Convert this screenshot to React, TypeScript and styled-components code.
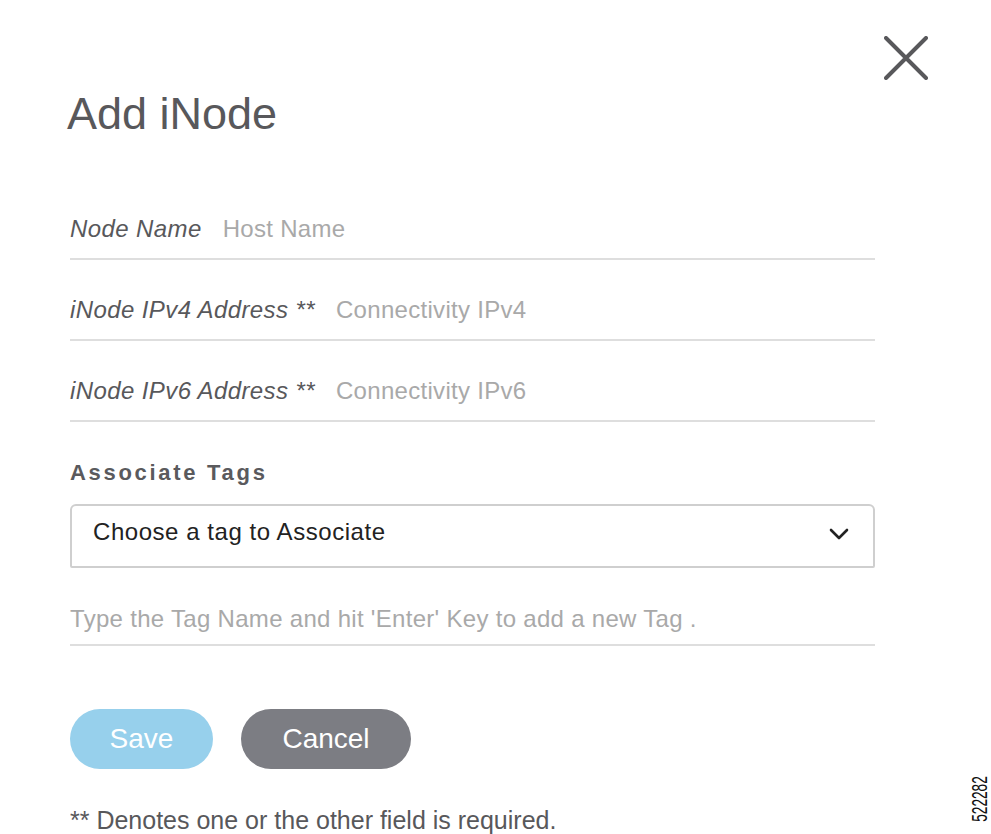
import React, { useState } from 'react'
import styled, { createGlobalStyle } from 'styled-components'

const GlobalStyle = createGlobalStyle`
	html, body {
		margin: 0;
		padding: 0;
		background: #ffffff;
		overflow: hidden;
	}
	body {
		font-family: 'Liberation Sans', Arial, sans-serif;
	}
`

const fields = [
	{ label: 'Node Name', placeholder: 'Host Name' },
	{ label: 'iNode IPv4 Address **', placeholder: 'Connectivity IPv4' },
	{ label: 'iNode IPv6 Address **', placeholder: 'Connectivity IPv6' },
]

const CloseIcon: React.FC = () => (
	<svg width="44" height="44" viewBox="0 0 44 44" fill="none">
		<path
			d="M2 2 L42 42 M42 2 L2 42"
			stroke="#58585b"
			strokeWidth="4"
			strokeLinecap="round"
		/>
	</svg>
)

const Chevron: React.FC = () => (
	<svg width="20" height="12" viewBox="0 0 20 12" fill="none">
		<path
			d="M2 2 L10 10 L18 2"
			stroke="#222222"
			strokeWidth="2.6"
			strokeLinecap="round"
			strokeLinejoin="round"
		/>
	</svg>
)

export default function App() {
	const [tag, setTag] = useState('')

	return (
		<Page>
			<GlobalStyle />
			<TopBar>
				<CloseButton aria-label="Close">
					<CloseIcon />
				</CloseButton>
			</TopBar>
			<Body>
				<Title>Add iNode</Title>
				<Form>
					{fields.map(f => (
						<FieldRow key={f.label}>
							<FieldLabel>{f.label}</FieldLabel>
							<FieldInput placeholder={f.placeholder} />
						</FieldRow>
					))}
					<SectionLabel>Associate Tags</SectionLabel>
					<Select>
						<SelectText>Choose a tag to Associate</SelectText>
						<Chevron />
					</Select>
					<TagRow>
						<FieldInput
							value={tag}
							onChange={e => setTag(e.target.value)}
							placeholder="Type the Tag Name and hit 'Enter' Key to add a new Tag ."
						/>
					</TagRow>
					<Actions>
						<PillButton $variant="save" $width={143}>
							Save
						</PillButton>
						<PillButton $variant="cancel" $width={170}>
							Cancel
						</PillButton>
					</Actions>
					<Footnote>** Denotes one or the other field is required.</Footnote>
				</Form>
			</Body>
			<FigureId>522282</FigureId>
		</Page>
	)
}

const Page = styled.div`
	position: relative;
	width: 991px;
	height: 834px;
	background: #ffffff;
`

const TopBar = styled.div`
	display: flex;
	justify-content: flex-end;
	padding: 36px 63px 0 0;
`

const CloseButton = styled.button`
	width: 44px;
	height: 44px;
	padding: 0;
	border: none;
	background: transparent;
	cursor: pointer;
	display: flex;
`

const Body = styled.div`
	width: 805px;
	padding-left: 70px;
`

const Title = styled.h1`
	margin: 7px 0 0 -3px;
	font-size: 45px;
	line-height: 54px;
	font-weight: 400;
	color: #58585b;
`

const Form = styled.form`
	display: flex;
	flex-direction: column;
	margin-top: 71px;
`

const FieldRow = styled.div`
	display: flex;
	align-items: baseline;
	gap: 21px;
	padding: 2px 0 14px;
	margin-bottom: 33px;
	border-bottom: 2px solid #dedede;
	font-size: 24px;
	line-height: 30px;
`

const FieldLabel = styled.label`
	font-style: italic;
	color: #58585b;
	white-space: nowrap;
	letter-spacing: 0.4px;
`

const FieldInput = styled.input`
	flex: 1;
	min-width: 0;
	height: 30px;
	padding: 0;
	border: none;
	outline: none;
	background: transparent;
	font-family: inherit;
	font-size: 24px;
	line-height: 30px;
	letter-spacing: 0.3px;
	color: #333333;

	&::placeholder {
		color: #a9a9a9;
	}
`

const SectionLabel = styled.div`
	margin-top: 4px;
	font-size: 22px;
	line-height: 28px;
	font-weight: 700;
	letter-spacing: 2.7px;
	color: #5a5a5d;
`

const Select = styled.div`
	box-sizing: border-box;
	display: flex;
	align-items: flex-start;
	justify-content: space-between;
	height: 64px;
	margin-top: 17px;
	padding: 11px 24px 0 21px;
	border: 2px solid #cfcfcf;
	border-radius: 6px 6px 2px 2px;
	cursor: pointer;

	svg {
		margin-top: 11px;
	}
`

const SelectText = styled.span`
	font-size: 24px;
	line-height: 30px;
	letter-spacing: 0.55px;
	color: #222222;
`

const TagRow = styled.div`
	display: flex;
	margin-top: 34px;
	padding: 2px 0 10px;
	border-bottom: 2px solid #dedede;
`

const Actions = styled.div`
	display: flex;
	gap: 28px;
	margin-top: 63px;
`

const PillButton = styled.button<{ $variant: 'save' | 'cancel'; $width: number }>`
	width: ${p => p.$width}px;
	height: 60px;
	border: none;
	border-radius: 30px;
	padding: 0;
	font-family: inherit;
	font-size: 28px;
	color: #ffffff;
	background: ${p => (p.$variant === 'save' ? '#97d0ec' : '#7c7d83')};
	cursor: pointer;
`

const Footnote = styled.p`
	margin: 36px 0 0;
	font-size: 25px;
	line-height: 30px;
	color: #58585b;
`

const FigureId = styled.div`
	position: absolute;
	right: -25px;
	top: 786px;
	font-size: 22px;
	line-height: 26px;
	color: #111111;
	transform: rotate(-90deg) scaleX(0.62);
`
